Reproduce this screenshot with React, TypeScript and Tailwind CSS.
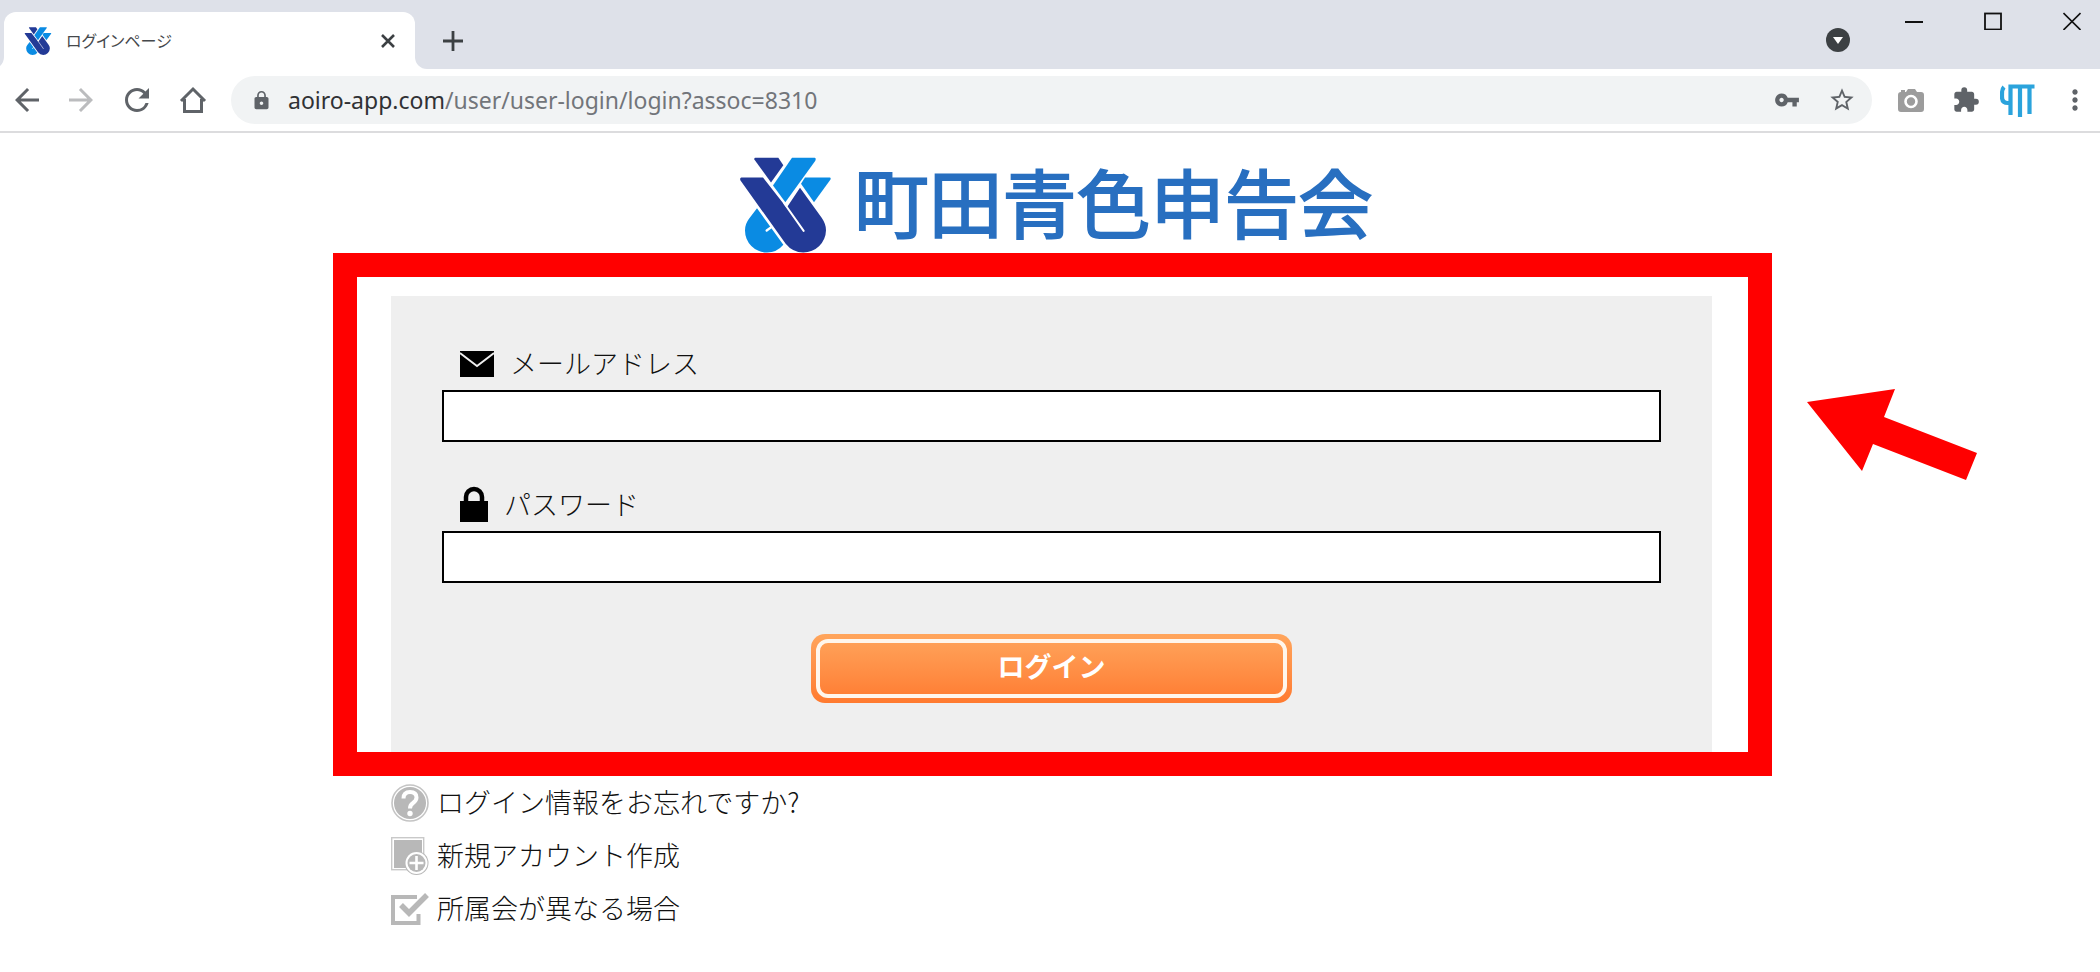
import React from "react";
import {
  MdArrowBack,
  MdArrowForward,
  MdExtension,
  MdLock,
  MdMoreVert,
  MdRefresh,
  MdStarBorder,
  MdVpnKey,
} from "react-icons/md";

const LogoMark: React.FC<{ className?: string }> = ({ className }) => (
  <svg viewBox="57 51 273 287" className={className} aria-hidden="true">
    <path
      d="M108 204 L187 314 Q168 337 138 337 A66 66 0 0 1 72 270 Q72 252 84 236 Z"
      fill="#0a8be3"
    />
    <path d="M137 271 L152 260" stroke="#fff" strokeWidth="7" strokeLinecap="round" />
    <path d="M103 53 H172 L187 75 L150 127 L100 58 Q99 53 103 53 Z" fill="#233a96" />
    <path d="M213 53 H281 Q286 54 283 62 L193 186 L156 136 Z" fill="#0a8be3" />
    <path d="M252 112 H326 Q331 113 328 119 L279 186 L240 131 Z" fill="#0a8be3" />
    <path
      d="M61 112 H126 L197 203 L237 143 L302 233 Q315 252 315 270 A68 68 0 0 1 247 337 Q215 337 194 311 L58 120 Q56 113 61 112 Z"
      fill="#233a96"
    />
    <path d="M190 190 L248 272" stroke="#fff" strokeWidth="6" strokeLinecap="round" />
  </svg>
);

const Tab: React.FC<{ title: string }> = ({ title }) => (
  <div className="relative ml-1 mt-3 flex w-[411px] items-center rounded-t-xl bg-white pl-5 pr-5">
    <span className="absolute bottom-0 right-full size-3 bg-white">
      <span className="block size-full rounded-br-xl bg-[#dee1e9]" />
    </span>
    <span className="absolute bottom-0 left-full size-3 bg-white">
      <span className="block size-full rounded-bl-xl bg-[#dee1e9]" />
    </span>
    <LogoMark className="h-7 w-7" />
    <span className="ml-3.5 flex-1 text-base text-[#45484c] [font-feature-settings:'palt']">
      {title}
    </span>
    <button type="button" aria-label="タブを閉じる">
      <svg viewBox="0 0 14 14" className="size-3.5" stroke="#3c4043" strokeWidth="2.6">
        <path d="M1 1 L13 13 M13 1 L1 13" />
      </svg>
    </button>
  </div>
);

const TabStrip: React.FC = () => (
  <div className="flex h-[69px] bg-[#dee1e9]">
    <Tab title="ログインページ" />
    <button type="button" aria-label="新しいタブ" className="ml-7 mt-3">
      <svg viewBox="0 0 20 20" className="size-5" stroke="#3c4043" strokeWidth="2.8">
        <path d="M10 0 V20 M0 10 H20" />
      </svg>
    </button>
    <div className="ml-auto flex items-start pr-[19px]">
      <button type="button" aria-label="タブを検索" className="mr-[55px] mt-7">
        <svg viewBox="0 0 24 24" className="size-6">
          <circle cx="12" cy="12" r="12" fill="#3c4043" />
          <path d="M7 9 H17 L12 16 Z" fill="#fff" />
        </svg>
      </button>
      <div className="mt-3 flex gap-[61px]">
        <button type="button" aria-label="最小化">
          <svg viewBox="0 0 18 18" className="size-[18px]" stroke="#111" strokeWidth="2">
            <path d="M0 10 H18" />
          </svg>
        </button>
        <button type="button" aria-label="最大化">
          <svg viewBox="0 0 18 18" className="size-[18px]" stroke="#111" strokeWidth="1.8" fill="none">
            <rect x="1" y="1.5" width="16" height="16" />
          </svg>
        </button>
        <button type="button" aria-label="閉じる">
          <svg viewBox="0 0 18 18" className="size-[18px]" stroke="#111" strokeWidth="1.6">
            <path d="M0.5 1 L17.5 18 M17.5 1 L0.5 18" />
          </svg>
        </button>
      </div>
    </div>
  </div>
);

const Toolbar: React.FC = () => (
  <div className="flex h-16 items-center border-b-2 border-[#dcdcde] bg-white pl-[9px] pr-[9px] text-[#5f6368]">
    <button type="button" aria-label="戻る">
      <MdArrowBack className="size-9" />
    </button>
    <button type="button" aria-label="進む" className="ml-[18px] text-[#bbbcbe]">
      <MdArrowForward className="size-9" />
    </button>
    <button type="button" aria-label="再読み込み" className="ml-5">
      <MdRefresh className="size-9" />
    </button>
    <button type="button" aria-label="ホーム" className="ml-6">
      <svg viewBox="0 0 28 28" className="size-7" fill="none" stroke="currentColor" strokeWidth="3">
        <path d="M2 15 L14 3 L26 15 M5.5 13 V25.5 H22.5 V13" />
      </svg>
    </button>
    <div className="ml-6 flex h-12 flex-1 items-center rounded-full bg-[#f1f3f4] pl-5 pr-4">
      <MdLock className="size-[21px]" />
      <div className="ml-4 flex-1 text-[23px] text-[#72757a]">
        <span className="text-[#303134]">aoiro-app.com</span>
        /user/user-login/login?assoc=8310
      </div>
      <button type="button" aria-label="パスワードの管理">
        <MdVpnKey className="size-[26px]" />
      </button>
      <button type="button" aria-label="ブックマーク" className="ml-7">
        <MdStarBorder className="size-7" />
      </button>
    </div>
    <div className="ml-[26px] flex items-center">
      <button type="button" aria-label="カメラ" className="text-[#9c9c9c]">
        <svg viewBox="0 0 26 24" className="h-6 w-[26px]">
          <path
            d="M3 4 V2 H7 V4 H8 L10 1 H17 L19 4 H23 Q26 4 26 7 V21 Q26 24 23 24 H3 Q0 24 0 21 V7 Q0 4 3 4 Z"
            fill="currentColor"
          />
          <circle cx="13" cy="13.5" r="5.5" fill="none" stroke="#fff" strokeWidth="2.6" />
        </svg>
      </button>
      <button type="button" aria-label="拡張機能" className="ml-7">
        <MdExtension className="size-7" />
      </button>
      <button type="button" aria-label="メモ" className="ml-5">
        <svg viewBox="0 0 35 33" className="h-[33px] w-[35px]" fill="none" stroke="#2ba3dc" strokeWidth="4.2">
          <path d="M4 3 Q2 5 2 10 V13 Q2 19 8 19 H10 M10.5 31 V2.5 H34.5 M20 2 V33 M29.5 2 V30" />
        </svg>
      </button>
      <button type="button" aria-label="メニュー" className="ml-6">
        <MdMoreVert className="size-8" />
      </button>
    </div>
  </div>
);

const Field: React.FC<{
  id: string;
  type: string;
  label: string;
  icon: React.ReactNode;
}> = ({ id, type, label, icon }) => (
  <div>
    <label htmlFor={id} className="flex h-[54px] items-center gap-4 pl-[18px]">
      {icon}
      <span>{label}</span>
    </label>
    <input id={id} type={type} className="block h-[52px] w-full border-2 border-black bg-white px-3" />
  </div>
);

const MailIcon: React.FC = () => (
  <svg viewBox="0 0 34 28" className="h-7 w-[34px]" aria-hidden="true">
    <rect y="2" width="34" height="26" />
    <path d="M0 4 L17 17 L34 4" fill="none" stroke="#efefef" strokeWidth="1.8" />
  </svg>
);

const PadlockIcon: React.FC = () => (
  <svg viewBox="0 0 28 36" className="h-9 w-7" aria-hidden="true">
    <rect y="15" width="28" height="21" />
    <path d="M6 17 V11 A8 8 0 0 1 22 11 V17" fill="none" stroke="#000" strokeWidth="4.5" />
  </svg>
);

const LoginForm: React.FC = () => (
  <form className="bg-[#efefef] px-[51px] pb-[49px] pt-10" onSubmit={(e) => e.preventDefault()}>
    <div className="flex flex-col gap-[35px]">
      <Field id="email" type="email" label="メールアドレス" icon={<MailIcon />} />
      <Field id="password" type="password" label="パスワード" icon={<PadlockIcon />} />
    </div>
    <button
      type="submit"
      className="mx-auto mt-[51px] block h-[69px] w-[481px] rounded-[14px] bg-linear-to-b from-[#ffa55c] to-[#ff7a2f] p-[5px] font-bold text-white"
    >
      <span className="flex h-full items-center justify-center rounded-xl border-4 border-[#fff6ec] pb-1">
        ログイン
      </span>
    </button>
  </form>
);

const HelpIcon: React.FC = () => (
  <svg viewBox="0 0 38 38" className="size-[38px]" aria-hidden="true">
    <circle cx="19" cy="19" r="18" fill="#fff" stroke="#c4c4c4" strokeWidth="1.6" />
    <circle cx="19" cy="19" r="16" fill="#b8b8b8" />
    <path
      d="M12.5 14.5 Q12.5 8 19 8 Q25.5 8 25.5 13.5 Q25.5 16.5 22 19 Q19 21 19 24.5"
      fill="none"
      stroke="#fff"
      strokeWidth="4"
    />
    <circle cx="19" cy="29.5" r="2.7" fill="#fff" />
  </svg>
);

const AddIcon: React.FC = () => (
  <svg viewBox="0 0 38 38" className="size-[38px]" aria-hidden="true">
    <rect x="0.7" y="0.7" width="32" height="32" fill="#fff" stroke="#c9c9c9" strokeWidth="1.4" />
    <rect x="3" y="3" width="28" height="28" fill="#b8b8b8" />
    <circle cx="25.5" cy="26" r="12" fill="#b8b8b8" />
    <circle cx="25.5" cy="26" r="11" fill="#fff" />
    <circle cx="25.5" cy="26" r="9" fill="#b8b8b8" />
    <path d="M25.5 19 V33 M18.5 26 H32.5" stroke="#fff" strokeWidth="2.6" />
  </svg>
);

const CheckIcon: React.FC = () => (
  <svg viewBox="0 0 38 38" className="size-[38px]" fill="none" stroke="#b8b8b8" aria-hidden="true">
    <path d="M26 7 H2 V33 H27.5 V24" strokeWidth="4" />
    <path d="M10 15 L18 23 L36 5" strokeWidth="5.5" />
  </svg>
);

const links = [
  { text: "ログイン情報をお忘れですか?", icon: <HelpIcon /> },
  { text: "新規アカウント作成", icon: <AddIcon /> },
  { text: "所属会が異なる場合", icon: <CheckIcon /> },
];

const App: React.FC = () => {
  return (
    <div className="min-h-screen bg-white font-['Noto_Sans','Noto_Sans_CJK_JP',sans-serif]">
      <TabStrip />
      <Toolbar />
      <main className="font-['Noto_Sans_CJK_JP',sans-serif] text-[27px] font-light text-[#111]">
        <h1 className="flex h-[120px] items-end justify-center pl-3 text-[74px] font-normal leading-none text-[#286fc0]">
          <LogoMark className="mr-6 h-24 w-[91px]" />
          <span className="pb-4 [-webkit-text-stroke:2px_#286fc0] [stroke-linejoin:round]">
            町田青色申告会
          </span>
        </h1>
        <div className="relative ml-[333px] mr-[328px] border-24 border-[#f00] pl-[34px] pr-9 pt-[19px]">
          <LoginForm />
          <svg
            viewBox="0 0 170 91"
            className="absolute left-full top-28 ml-[59px] h-[91px] w-[170px]"
            aria-hidden="true"
          >
            <path d="M0 13 L88 0 L77 28 L170 64 L159 91 L66 55 L55 82 Z" fill="#f00" />
          </svg>
        </div>
        <ul className="ml-[391px]">
          {links.map((link) => (
            <li key={link.text}>
              <a href="#" className="flex h-[53px] items-center gap-2">
                {link.icon}
                {link.text}
              </a>
            </li>
          ))}
        </ul>
      </main>
    </div>
  );
};

export default App;
